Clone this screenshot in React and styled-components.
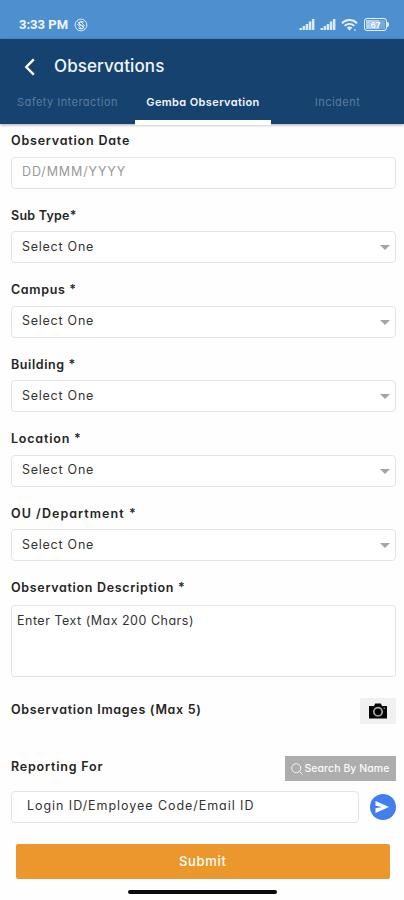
import React from "react";
import styled, { createGlobalStyle } from "styled-components";

const SELECT_FIELDS = [
  { label: "Sub Type*", spacing: "0.25px" },
  { label: "Campus *", spacing: "0.65px" },
  { label: "Building *", spacing: "0.6px" },
  { label: "Location *", spacing: "0.8px" },
  { label: "OU /Department *", spacing: "1.05px" },
];

const SignalIcon = () => (
  <svg width="17" height="13" viewBox="0 0 17 13" fill="#dcebf9">
    <rect x="0.5" y="10" width="2.5" height="2" />
    <rect x="3.6" y="8" width="2.5" height="4" />
    <rect x="6.7" y="6" width="2.5" height="6" />
    <rect x="9.8" y="3.5" width="2.5" height="8.5" />
    <rect x="12.900" y="1" width="2.5" height="11" />
  </svg>
);

const WifiIcon = () => (
  <svg width="17" height="14" viewBox="0 0 17 14" fill="none" stroke="#e6f1fb">
    <path d="M1 5.2C5.2 1 11.8 1 16 5.2" strokeWidth="2" />
    <path d="M3.6 7.9C6.4 5.2 10.6 5.2 13.4 7.9" strokeWidth="1.8" />
    <path d="M5.8 9.6C7.4 8.2 9.6 8.2 11.2 9.6L8.5 12.8Z" fill="#e6f1fb" stroke="none" />
    <path d="M14 11v2" strokeWidth="1" />
  </svg>
);

const StatusBadgeIcon = () => (
  <svg width="14" height="14" viewBox="0 0 14 14" fill="none" stroke="#dcebf9">
    <circle cx="7" cy="7" r="5.9" strokeWidth="1" />
    <path d="M9.6 4.2C7.5 2.8 4.5 4 5 6s4.5 1 4.5 3-3 2.3-5 .8" strokeWidth="1.3" />
    <path d="M3.5 3.5l7 7M6 3l5 5M3 6l5 5" strokeWidth="0.8" />
  </svg>
);

const BackIcon = () => (
  <svg width="11" height="18" viewBox="0 0 11 18" fill="none" stroke="#fff" strokeWidth="2.4">
    <path d="M9.8 1.3L2.300 9l7.500 7.700" />
  </svg>
);

const CameraIcon = () => (
  <svg width="18" height="16" viewBox="0 0 18 16">
    <path d="M0 3h5l1.2-2.5h5.6L13 3h5v12.5H0z" fill="#050505" />
    <circle cx="9" cy="8.8" r="4.2" fill="none" stroke="#a8a8a8" strokeWidth="1.7" />
    <circle cx="15.3" cy="5.2" r="0.7" fill="#aaa" />
  </svg>
);

const SearchIcon = () => (
  <svg width="12" height="12" viewBox="0 0 12 12" fill="none" stroke="#f4f4f4">
    <circle cx="5.2" cy="5.2" r="4.5" />
    <path d="M8.5 8.5l3 3" />
  </svg>
);

const SendIcon = () => (
  <svg width="14" height="12" viewBox="0 0 14 12" fill="#fff">
    <path d="M0.5 0L14 6L0.5 12V7.3L7 6L0.5 4.7Z" />
  </svg>
);

const SelectField = ({ label, spacing }) => (
  <Field>
    <Label $spacing={spacing}>{label}</Label>
    <InputBox>
      <Value>Select One</Value>
      <Caret />
    </InputBox>
  </Field>
);

const App = () => {
  return (
    <>
      <GlobalStyle />
      <Screen>
        <StatusBar>
          <StatusGroup>
            <Time>3:33 PM</Time>
            <StatusBadgeIcon />
          </StatusGroup>
          <StatusGroup>
            <SignalIcon />
            <SignalIcon />
            <WifiIcon />
            <Battery>
              <BatteryLevel>67</BatteryLevel>
            </Battery>
          </StatusGroup>
        </StatusBar>

        <Header>
          <TitleRow>
            <BackIcon />
            <Title>Observations</Title>
          </TitleRow>
          <Tabs>
            <Tab $spacing="0.46px">Safety Interaction</Tab>
            <Tab $active $spacing="0.38px">
              Gemba Observation
            </Tab>
            <Tab $spacing="0.5px">Incident</Tab>
          </Tabs>
        </Header>

        <Form>
          <Field>
            <Label>Observation Date</Label>
            <InputBox>
              <Placeholder>DD/MMM/YYYY</Placeholder>
            </InputBox>
          </Field>
          {SELECT_FIELDS.map(({ label, spacing }) => (
            <SelectField key={label} label={label} spacing={spacing} />
          ))}
          <Label $spacing="0.68px">Observation Description *</Label>
          <TextBox>Enter Text (Max 200 Chars)</TextBox>

          <ImagesRow>
            <Label $spacing="0.7px">Observation Images (Max 5)</Label>
            <CameraButton>
              <CameraIcon />
            </CameraButton>
          </ImagesRow>

          <ReportingRow>
            <Label>Reporting For</Label>
            <SearchButton>
              <SearchIcon />
              Search By Name
            </SearchButton>
          </ReportingRow>
          <LoginRow>
            <LoginBox>
              <LoginText>Login ID/Employee Code/Email ID</LoginText>
            </LoginBox>
            <SendButton>
              <SendIcon />
            </SendButton>
          </LoginRow>
          <SubmitButton>Submit</SubmitButton>
        </Form>
        <HomeBar />
      </Screen>
    </>
  );
};

export default App;

const GlobalStyle = createGlobalStyle`
  * {
    box-sizing: border-box;
  }
  body {
    margin: 0;
    background: #fefefe;
  }
  button {
    font: inherit;
    font-feature-settings: inherit;
    border: none;
    padding: 0;
  }
`;

const Screen = styled.div`
  width: 404px;
  height: 900px;
  overflow: hidden;
  display: flex;
  flex-direction: column;
  background: #fefefe;
  font-family: Inter, "Liberation Sans", sans-serif;
  font-feature-settings: "cv11", "calt" 0;
  white-space: nowrap;
`;

const StatusBar = styled.div`
  height: 39px;
  flex-shrink: 0;
  padding: 10px 15px 0 19px;
  display: flex;
  align-items: center;
  justify-content: space-between;
  background: #4e90cf;
`;

const StatusGroup = styled.div`
  display: flex;
  align-items: center;
  gap: 4px;
`;

const Time = styled.span`
  margin-right: 2px;
  font-family: Roboto, sans-serif;
  font-size: 13px;
  font-weight: 700;
  color: #f0f7fd;
`;

const Battery = styled.div`
  position: relative;
  width: 23px;
  height: 13px;
  margin: 0 2px 0 2px;
  padding: 1px;
  border: 1.5px solid #e6f1fb;
  border-radius: 3px;

  &::after {
    content: "";
    position: absolute;
    top: 3px;
    right: -3px;
    width: 2px;
    height: 5px;
    border-radius: 0 2px 2px 0;
    background: #e6f1fb;
  }
`;

const BatteryLevel = styled.div`
  height: 100%;
  display: flex;
  align-items: center;
  justify-content: center;
  background: linear-gradient(90deg, #b4d2ef 70%, #76aadd 70%);
  font-size: 8px;
  font-weight: 800;
  color: #fff;
  text-shadow: 0 0 1px #3777b5;
`;

const Header = styled.header`
  height: 85px;
  flex-shrink: 0;
  display: flex;
  flex-direction: column;
  background: #16426f;
  box-shadow: 0 1px 3px rgba(0, 0, 0, 0.35);
`;

const TitleRow = styled.div`
  height: 47px;
  padding: 9px 0 0 24px;
  display: flex;
  align-items: center;
  gap: 19px;
`;

const Title = styled.h1`
  margin: -2px 0 0;
  font-size: 17px;
  font-weight: 500;
  letter-spacing: 0.1px;
  color: #f1f5f9;
`;

const Tabs = styled.nav`
  height: 38px;
  display: grid;
  grid-template-columns: 135px 136px 133px;
`;

const Tab = styled.div`
  height: ${({ $active }) => ($active ? "39px" : "38px")};
  padding-top: 8px;
  text-align: center;
  font-size: 11px;
  line-height: 16px;
  letter-spacing: ${({ $spacing }) => $spacing};
  font-weight: ${({ $active }) => ($active ? 600 : 400)};
  color: ${({ $active }) => ($active ? "#f2f6fa" : "#5b7b9d")};
  border-bottom: ${({ $active }) => ($active ? "5px solid #fff" : "none")};
`;

const Form = styled.main`
  display: flex;
  flex-direction: column;
  padding: 9px 8.5px 0 11px;
`;

const Field = styled.div`
  height: 74.5px;
  flex-shrink: 0;
`;

const Label = styled.div`
  height: 16px;
  font-size: 12.5px;
  line-height: 16px;
  font-weight: 600;
  letter-spacing: ${({ $spacing }) => $spacing || "0.8px"};
  color: #252525;
`;

const InputBox = styled.div`
  height: 32px;
  margin-top: 7.5px;
  padding: 0 5px 2px 10px;
  display: flex;
  align-items: center;
  justify-content: space-between;
  border: 1.5px solid #e4e4e4;
  border-radius: 4px;
  background: #fff;
`;

const Value = styled.span`
  font-size: 12.5px;
  font-weight: 400;
  letter-spacing: 0.75px;
  color: #333;
`;

const Placeholder = styled(Value)`
  letter-spacing: 0.88px;
  color: #999;
`;

const Caret = styled.span`
  margin-top: 3px;
  border-left: 5px solid transparent;
  border-right: 5px solid transparent;
  border-top: 5.5px solid #a5a5a5;
`;

const TextBox = styled.div`
  height: 72px;
  margin-top: 9px;
  padding: 7px 5px;
  border: 1.5px solid #e4e4e4;
  border-radius: 3px;
  background: #fff;
  font-size: 12.5px;
  line-height: 16px;
  letter-spacing: 0.5px;
  color: #333;
`;

const ImagesRow = styled.div`
  height: 26px;
  margin-top: 21px;
  display: flex;
  align-items: center;
  justify-content: space-between;

  ${Label} {
    margin-bottom: 2px;
  }
`;

const CameraButton = styled.button`
  width: 36px;
  height: 26px;
  display: flex;
  align-items: center;
  justify-content: center;
  background: #f0f0f0;
`;

const ReportingRow = styled.div`
  height: 25px;
  margin-top: 32px;
  display: flex;
  align-items: center;
  justify-content: space-between;

  ${Label} {
    margin-bottom: 4px;
  }
`;

const SearchButton = styled.button`
  width: 111px;
  height: 25px;
  display: flex;
  align-items: center;
  justify-content: center;
  gap: 2px;
  background: #adadad;
  font-size: 10.5px;
  font-weight: 500;
  letter-spacing: 0.06px;
  color: #fafafa;
`;

const LoginRow = styled.div`
  margin-top: 10px;
  display: flex;
  align-items: center;
  justify-content: space-between;
`;

const LoginBox = styled(InputBox)`
  width: 348px;
  margin-top: 0;
  padding: 0 15px 3px;
`;

const LoginText = styled(Value)`
  letter-spacing: 0.95px;
`;

const SendButton = styled.button`
  width: 26px;
  height: 26px;
  padding-right: 2px;
  display: flex;
  align-items: center;
  justify-content: center;
  border-radius: 50%;
  background: #427fee;
`;

const SubmitButton = styled.button`
  height: 35px;
  margin: 21px 6px 0 5px;
  padding-bottom: 1px;
  border-radius: 2px;
  background: #eb972b;
  font-size: 13px;
  font-weight: 500;
  letter-spacing: 0.7px;
  color: #fff;
`;

const HomeBar = styled.div`
  width: 149px;
  height: 4px;
  margin: 11px 0 0 128px;
  border-radius: 2px;
  background: #0a0a0a;
`;
